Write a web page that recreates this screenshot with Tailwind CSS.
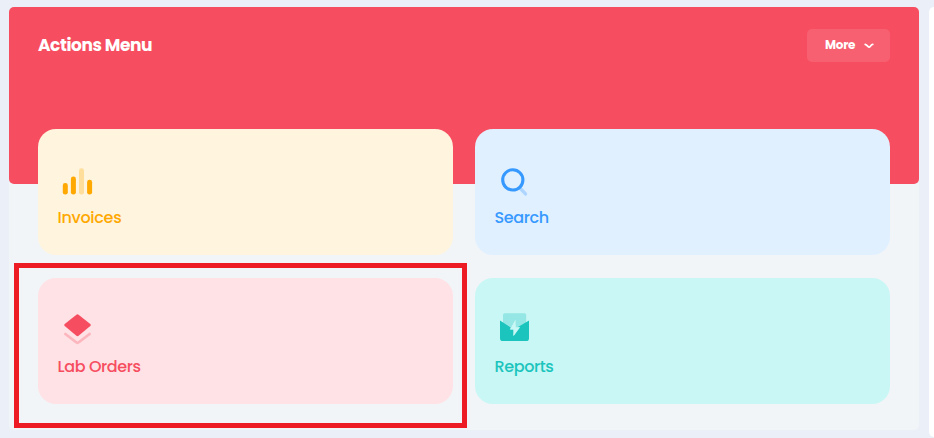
<!DOCTYPE html>
<html lang="en">
<head>
<meta charset="utf-8">
<title>Actions Menu</title>
<script src="https://cdn.jsdelivr.net/npm/@tailwindcss/browser@4"></script>
</head>
<body class="h-[438px] overflow-hidden bg-[#ebeff7] font-[Poppins,Inter,sans-serif]">
<div class="relative flex h-full gap-[10px] pt-[7px] pl-[9px]">
  <main class="h-[423px] w-[910px] shrink-0 rounded-[5px] bg-[#f1f5f8]">
    <header class="flex h-[177px] items-start justify-between rounded-[5px] bg-[#f64e60] px-[29px] pt-[22px]">
      <h1 class="pt-[4px] text-[17px] leading-6 font-bold tracking-[-0.42px] text-white">Actions Menu</h1>
      <button class="flex h-[33px] w-[83px] items-center rounded-[5px] bg-white/10 pb-px pl-[18px] text-[12px] font-bold tracking-[-0.25px] text-white">
        <span class="w-[39px] text-left">More</span>
        <svg class="mt-[2px] h-[6px] w-[10px]" viewBox="0 0 10 6" fill="none" stroke="white" stroke-width="1.7" stroke-linecap="round" stroke-linejoin="round"><path d="M1.2 1.4Q2.4 1.7 3.4 2.9T5 4.2T6.6 2.9T8.8 1.4"/></svg>
      </button>
    </header>
    <section class="-mt-[55px] grid grid-cols-2 gap-x-[22px] gap-y-[23px] px-[29px]">
      <a class="flex h-[126px] flex-col rounded-[18px] bg-[#fff4de] pt-[34px] pl-5 text-[#ffa800]">
        <svg class="h-10 w-10" viewBox="0 0 40 40" fill="currentColor"><rect x="4.8" y="20" width="5" height="11.6" rx="2.4"/><rect x="12.9" y="13.5" width="5" height="18.1" rx="2.4"/><rect x="21" y="5.3" width="5" height="26.3" rx="2.4" opacity=".3"/><rect x="29.1" y="16.8" width="5" height="14.8" rx="2.4"/></svg>
        <span class="-ml-[0.5px] mt-[3px] text-[16px] leading-6 font-medium tracking-[-0.3px]">Invoices</span>
      </a>
      <a class="flex h-[126px] flex-col rounded-[18px] bg-[#e1f0ff] pt-[34px] pl-5 text-[#3699ff]">
        <svg class="h-10 w-10" viewBox="0 0 40 40" fill="none" stroke="currentColor"><path d="M24.8 24.8L30.5 30.9" stroke-width="3.4" stroke-linecap="round" opacity=".3"/><circle cx="17.8" cy="16.9" r="10.1" stroke-width="3.1"/></svg>
        <span class="-ml-[0.5px] mt-[3px] text-[16px] leading-6 font-medium tracking-[-0.38px]">Search</span>
      </a>
      <a class="flex h-[126px] flex-col rounded-[18px] bg-[#ffe2e5] pt-[34px] pl-5 text-[#f64e60]">
        <svg class="h-10 w-10" viewBox="0 0 40 40" fill="currentColor"><path d="M18.1 2.9Q19.5 1.8 20.9 2.9L32.3 12Q33.4 13.1 32.3 14.1L20.9 23.6Q19.5 24.7 18.1 23.6L6.7 14.1Q5.6 13.1 6.7 12Z"/><path d="M7.4 22L18.2 30.3Q19.5 31.3 20.8 30.3L31.6 22" fill="none" stroke="currentColor" stroke-width="2.7" stroke-linecap="round" opacity=".3"/></svg>
        <span class="-ml-[0.5px] mt-[3px] text-[16px] leading-6 font-medium tracking-[-0.38px]">Lab Orders</span>
      </a>
      <a class="flex h-[126px] flex-col rounded-[18px] bg-[#c9f7f5] pt-[34px] pl-5 text-[#1bc5bd]">
        <svg class="h-10 w-10" viewBox="0 0 40 40" fill="currentColor"><path opacity=".3" d="M8 14V3Q8 1.3 9.7 1.3H29.5Q31.2 1.3 31.2 3V14L19.6 22Z"/><path d="M5 8.4L15.6 15.4L15 17.5H18.5V24L25 15.3H22.6L34 8.4V26.2Q34 29.1 31.1 29.1H7.9Q5 29.1 5 26.2Z"/><path d="M20.5 7.6L15 17.6H18.5V24L25 15.2H20.8Z" fill="#c9f7f5"/></svg>
        <span class="-ml-[0.5px] mt-[3px] text-[16px] leading-6 font-medium tracking-[-0.4px]">Reports</span>
      </a>
    </section>
  </main>
  <aside class="h-[430px] w-[40px] shrink-0 rounded-[5px] bg-white"></aside>
  <div class="pointer-events-none absolute top-[263px] left-[14px] h-[165px] w-[453px] border-5 border-[#ed1c24]"></div>
</div>
</body>
</html>
